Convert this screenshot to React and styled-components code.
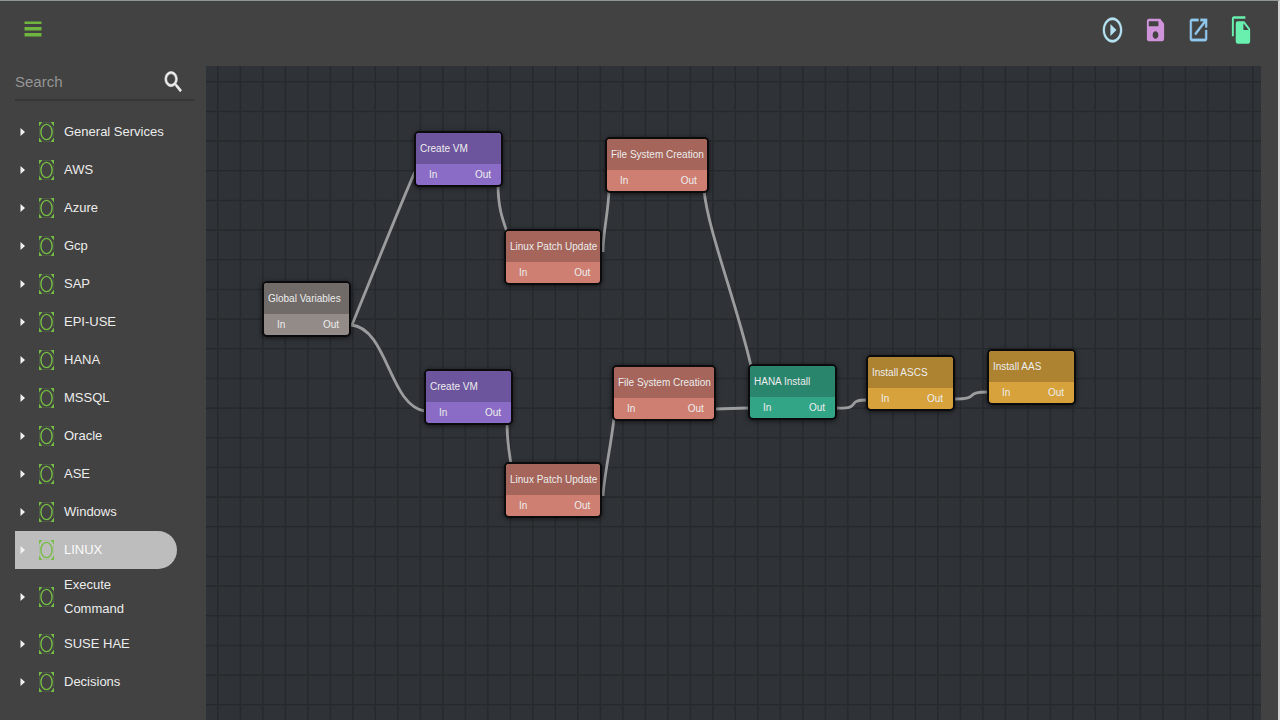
import React, { useState } from "react";
import styled, { createGlobalStyle } from "styled-components";

const GlobalStyle = createGlobalStyle`
  *, *::before, *::after { box-sizing: border-box; }
  body {
    margin: 0;
    background: #424242;
    font-family: "Liberation Sans", Arial, sans-serif;
    color: #ececec;
  }
  button, input { font: inherit; color: inherit; }
`;

const Shell = styled.div`
  display: flex;
  flex-direction: column;
  height: 100vh;
  overflow: hidden;
  background: #424242;
  border-top: 1px solid #8f9494;
  border-right: 2px solid #d4d4d4;
`;

const Header = styled.header`
  display: flex;
  flex: none;
  align-items: center;
  justify-content: space-between;
  height: 65px;
  padding: 0 25px 8px 21px;
`;

const IconButton = styled.button`
  display: flex;
  padding: 0;
  border: 0;
  background: none;
  color: ${(p) => p.$color};
  cursor: pointer;
`;

const Tools = styled.div`
  display: flex;
  gap: 20px;
`;

const Body = styled.div`
  display: flex;
  flex: 1;
  min-height: 0;
`;

const Sidebar = styled.aside`
  flex: none;
  width: 206px;
  padding-left: 15px;
`;

const SearchBox = styled.label`
  display: flex;
  align-items: center;
  width: 179px;
  height: 35px;
  border-bottom: 2px solid #363636;
  padding: 0 9px 2px 0;
`;

const SearchInput = styled.input`
  flex: 1;
  min-width: 0;
  padding: 0;
  border: 0;
  outline: 0;
  background: none;
  font-size: 15px;
  line-height: 24px;
  &::placeholder { color: #959595; opacity: 1; }
`;

const Tree = styled.ul`
  width: 162px;
  margin: 12px 0 0;
  padding: 0;
  list-style: none;
`;

const TreeItem = styled.button`
  display: flex;
  align-items: center;
  width: 100%;
  min-height: 38px;
  padding: 4px 10px 4px 5px;
  border: 0;
  border-radius: 0 19px 19px 0;
  background: ${(p) => (p.$selected ? "#bdbdbd" : "none")};
  color: ${(p) => (p.$selected ? "#fafafa" : "#ececec")};
  font-size: 13px;
  line-height: 24px;
  text-align: left;
  cursor: pointer;
  svg { flex: none; }
`;

const TreeLabel = styled.span`
  margin-left: 10px;
`;

const CaretIcon = styled.svg`
  margin-right: 14px;
`;

const Canvas = styled.main`
  position: relative;
  flex: 1;
  margin-right: 17px;
  overflow: hidden;
  background: #2f3237;
`;

const Wires = styled.svg`
  position: absolute;
  inset: 0;
  width: 100%;
  height: 100%;
`;

const tones = {
  gray: ["#706b68", "#938b88"],
  purple: ["#6d559e", "#8a6cc6"],
  coral: ["#a5655a", "#cf7f71"],
  green: ["#29856c", "#33a587"],
  amber: ["#ad8230", "#d7a23c"],
};

const NodeBox = styled.section`
  position: absolute;
  left: ${(p) => p.$x}px;
  top: ${(p) => p.$y}px;
  min-width: 89px;
  border: 2px solid #0b0b0d;
  border-radius: 5px;
  overflow: hidden;
  background: ${(p) => tones[p.$tone][1]};
  box-shadow: 0 1px 5px rgba(0, 0, 0, 0.6);
  font-size: 10px;
  white-space: nowrap;
`;

const NodeTitle = styled.h2`
  margin: 0;
  padding: 0 3px 0 4px;
  background: ${(p) => tones[p.$tone][0]};
  font-size: 10px;
  font-weight: 400;
  line-height: 31px;
`;

const Ports = styled.div`
  display: flex;
  justify-content: space-between;
  padding: 0 10px 0 13px;
  line-height: 21px;
`;

function StretchIcon({ d, width = 23, height = 30, weight = 0 }) {
  return (
    <svg
      width={width}
      height={height}
      viewBox="0 0 24 24"
      preserveAspectRatio="none"
      fill="currentColor"
      stroke="currentColor"
      strokeWidth={weight}
      aria-hidden="true"
    >
      <path d={d} />
    </svg>
  );
}

const paths = {
  play: "M10 16.5l6-4.5-6-4.5v9zM12 2C6.48 2 2 6.48 2 12s4.48 10 10 10 10-4.48 10-10S17.52 2 12 2zm0 18c-4.41 0-8-3.59-8-8s3.59-8 8-8 8 3.59 8 8-3.59 8-8 8z",
  save: "M17 3H5c-1.11 0-2 .9-2 2v14c0 1.1.89 2 2 2h14c1.1 0 2-.9 2-2V7l-4-4zm-5 16c-1.66 0-3-1.34-3-3s1.34-3 3-3 3 1.34 3 3-1.34 3-3 3zm3-10H5V5h10v4z",
  open: "M19 19H5V5h7V3H5c-1.11 0-2 .9-2 2v14c0 1.1.89 2 2 2h14c1.1 0 2-.9 2-2v-7h-2v7zM14 3v2h3.59l-9.83 9.83 1.41 1.41L19 6.41V10h2V3h-7z",
  copy: "M16 1H4c-1.1 0-2 .9-2 2v14h2V3h12V1zm-1 4l6 6v10c0 1.1-.9 2-2 2H7.99C6.89 23 6 22.1 6 21l.01-14c0-1.1.89-2 1.99-2h7zm-1 7h5.5L14 6.5V12z",
  search: "M15.5 14h-.79l-.28-.27C15.41 12.59 16 11.11 16 9.5 16 5.91 13.09 3 9.5 3S3 5.91 3 9.5 5.91 16 9.5 16c1.61 0 3.09-.59 4.23-1.57l.27.28v.79l5 4.99L20.49 19l-4.99-5zm-6 0C7.01 14 5 11.99 5 9.5S7.01 5 9.5 5 14 7.01 14 9.5 11.99 14 9.5 14z",
};

const tools = [
  { label: "Run", color: "#b5e2f2", d: paths.play, weight: 0.3 },
  { label: "Save", color: "#ce93d8", d: paths.save },
  { label: "Open in new window", color: "#90c8ee", d: paths.open, weight: 0.3 },
  { label: "Copy", color: "#69f0ae", d: paths.copy },
];

const services = [
  "General Services", "AWS", "Azure", "Gcp", "SAP", "EPI-USE", "HANA", "MSSQL",
  "Oracle", "ASE", "Windows", "LINUX", "Execute Command", "SUSE HAE", "Decisions",
];

const nodes = [
  { title: "Global Variables", tone: "gray", x: 56, y: 215 },
  { title: "Create VM", tone: "purple", x: 208, y: 65 },
  { title: "Create VM", tone: "purple", x: 218, y: 303 },
  { title: "Linux Patch Update", tone: "coral", x: 298, y: 163 },
  { title: "Linux Patch Update", tone: "coral", x: 298, y: 396 },
  { title: "File System Creation", tone: "coral", x: 399, y: 71 },
  { title: "File System Creation", tone: "coral", x: 406, y: 299 },
  { title: "HANA Install", tone: "green", x: 542, y: 298 },
  { title: "Install ASCS", tone: "amber", x: 660, y: 289 },
  { title: "Install AAS", tone: "amber", x: 781, y: 283 },
];

const wires = [
  "M146 259C151 247 203 117 209 106",
  "M145 259C182 262 183 340 219 345",
  "M292 118C292 140 296 152 301 166",
  "M397 186C397 165 402 150 403 124",
  "M498 124C502 165 530 235 545 300",
  "M301 357C301 375 303 385 305 398",
  "M397 430C398 410 405 380 408 352",
  "M509 343C525 343 525 342 543 342",
  "M630 342C658 343 638 334 661 334",
  "M748 333C776 333 756 326 782 326",
];

function GroupIcon() {
  return (
    <svg width="15" height="20" viewBox="0 0 15 20" fill="none" stroke="#76bd45" aria-hidden="true">
      <ellipse cx="7.5" cy="10" rx="5.6" ry="7.6" strokeWidth="1.4" />
      <path d="M0 0H3.4L0 4.6ZM15 0H11.6L15 4.6ZM0 20H3.4L0 15.4ZM15 20H11.6L15 15.4Z" fill="#76bd45" stroke="none" />
      <path d="M.6 5V15M14.4 5V15M4 .6H11M4 19.4H11" strokeOpacity=".2" />
    </svg>
  );
}

function Node({ title, tone, x, y }) {
  return (
    <NodeBox $x={x} $y={y} $tone={tone}>
      <NodeTitle $tone={tone}>{title}</NodeTitle>
      <Ports>
        <span>In</span>
        <span>Out</span>
      </Ports>
    </NodeBox>
  );
}

export default function App() {
  const [selected, setSelected] = useState("LINUX");
  return (
    <>
      <GlobalStyle />
      <Shell>
        <Header>
          <IconButton $color="#6fb53f" aria-label="Menu">
            <svg width="24" height="24" viewBox="0 0 24 24" fill="currentColor" aria-hidden="true">
              <path d="M3.5 3.4h17v2.6h-17zM3.5 9h17v3.4h-17zM3.5 15h17v3.4h-17z" />
            </svg>
          </IconButton>
          <Tools>
            {tools.map((t) => (
              <IconButton key={t.label} $color={t.color} aria-label={t.label}>
                <StretchIcon d={t.d} weight={t.weight} />
              </IconButton>
            ))}
          </Tools>
        </Header>
        <Body>
          <Sidebar>
            <SearchBox>
              <SearchInput type="text" placeholder="Search" aria-label="Search" />
              <StretchIcon d={paths.search} width={23} height={28} weight={0.5} />
            </SearchBox>
            <nav aria-label="Services">
              <Tree>
                {services.map((name) => (
                  <li key={name}>
                    <TreeItem $selected={name === selected} onClick={() => setSelected(name)}>
                      <CaretIcon width="5" height="9" viewBox="0 0 5 9" fill="#f2f2f2" aria-hidden="true">
                        <path d="M.5 0L5 4L.5 8Z" />
                      </CaretIcon>
                      <GroupIcon />
                      <TreeLabel>{name}</TreeLabel>
                    </TreeItem>
                  </li>
                ))}
              </Tree>
            </nav>
          </Sidebar>
          <Canvas>
            <Wires aria-hidden="true">
              <defs>
                <pattern id="grid" x="11" y="15" width="45" height="89" patternUnits="userSpaceOnUse">
                  <path
                    d="M.8 0V89M23.3 0V89M0 .8H45M0 30.5H45M0 60.1H45"
                    stroke="#272a2d"
                    strokeWidth="1.6"
                  />
                </pattern>
              </defs>
              <rect width="100%" height="100%" fill="url(#grid)" />
              <g fill="none" stroke="#9b9c9d" strokeWidth="2.8">
                {wires.map((d) => (
                  <path key={d} d={d} />
                ))}
              </g>
            </Wires>
            {nodes.map((n) => (
              <Node key={`${n.x}-${n.y}`} {...n} />
            ))}
          </Canvas>
        </Body>
      </Shell>
    </>
  );
}
